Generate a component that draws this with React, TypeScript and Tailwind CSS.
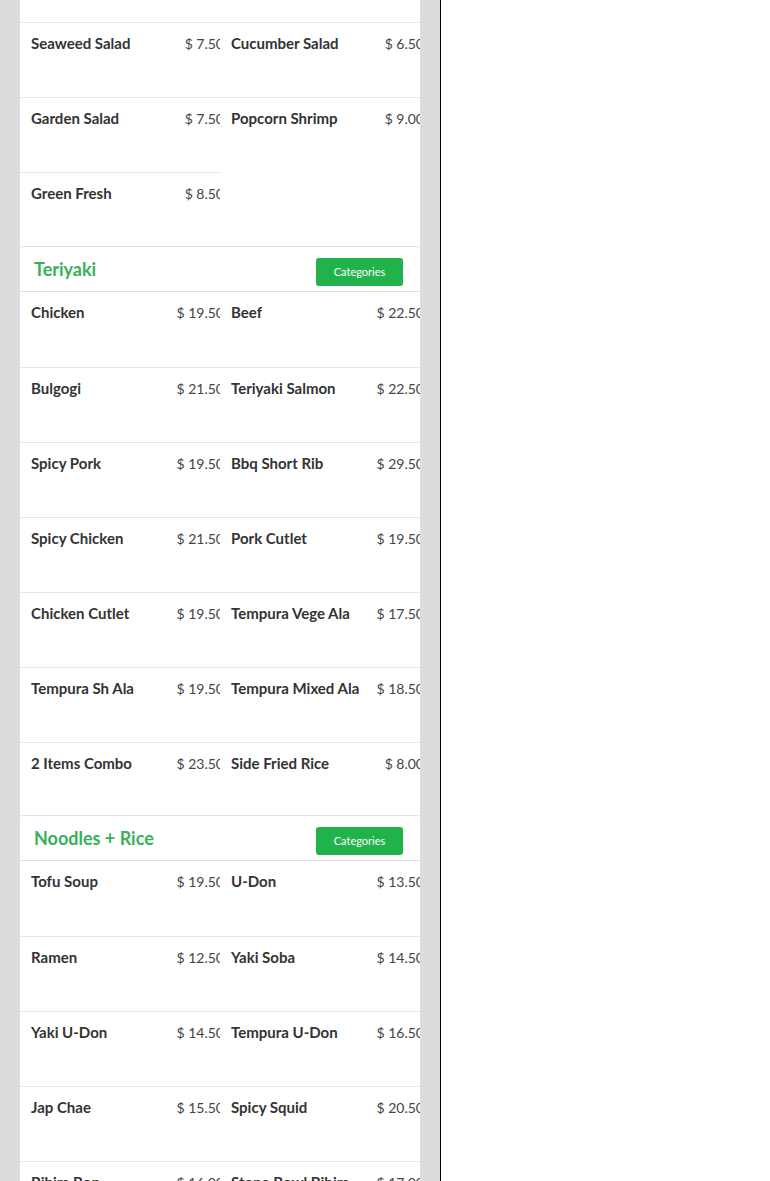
import React from "react";

type Item = [string, string];

const salads: Item[] = [
  ["Seaweed Salad", "$ 7.50"],
  ["Cucumber Salad", "$ 6.50"],
  ["Garden Salad", "$ 7.50"],
  ["Popcorn Shrimp", "$ 9.00"],
  ["Green Fresh", "$ 8.50"],
];

const teriyaki: Item[] = [
  ["Chicken", "$ 19.50"],
  ["Beef", "$ 22.50"],
  ["Bulgogi", "$ 21.50"],
  ["Teriyaki Salmon", "$ 22.50"],
  ["Spicy Pork", "$ 19.50"],
  ["Bbq Short Rib", "$ 29.50"],
  ["Spicy Chicken", "$ 21.50"],
  ["Pork Cutlet", "$ 19.50"],
  ["Chicken Cutlet", "$ 19.50"],
  ["Tempura Vege Ala", "$ 17.50"],
  ["Tempura Sh Ala", "$ 19.50"],
  ["Tempura Mixed Ala", "$ 18.50"],
  ["2 Items Combo", "$ 23.50"],
  ["Side Fried Rice", "$ 8.00"],
];

const noodles: Item[] = [
  ["Tofu Soup", "$ 19.50"],
  ["U-Don", "$ 13.50"],
  ["Ramen", "$ 12.50"],
  ["Yaki Soba", "$ 14.50"],
  ["Yaki U-Don", "$ 14.50"],
  ["Tempura U-Don", "$ 16.50"],
  ["Jap Chae", "$ 15.50"],
  ["Spicy Squid", "$ 20.50"],
  ["Bibim Bop", "$ 16.00"],
  ["Stone Bowl Bibim", "$ 17.00"],
];

function Cell({ item, first }: { item: Item; first?: boolean }) {
  return (
    <div
      className={`h-[75px] overflow-hidden flex items-baseline justify-between pl-[11px] pt-[10px] ${
        first ? "" : "border-t border-[#e6e6e6]"
      }`}
    >
      <span className="text-[15px] leading-[20px] font-bold text-[#333333] whitespace-nowrap">
        {item[0]}
      </span>
      <span className="text-[14px] leading-[20px] text-[#444444] whitespace-nowrap shrink-0 mr-[-4px]">
        {item[1]}
      </span>
    </div>
  );
}

function Grid({ items, noTopBorder }: { items: Item[]; noTopBorder?: boolean }) {
  return (
    <div className="grid grid-cols-2">
      {items.map((it, i) => (
        <Cell key={i} item={it} first={noTopBorder && i < 2} />
      ))}
    </div>
  );
}

function Header({ title }: { title: string }) {
  return (
    <div className="h-[46px] border-y border-[#e0e0e0] flex items-start justify-between pl-[14px] pr-[17px] rounded-t-[3px]">
      <span className="pt-[11px] text-[18px] leading-[22px] font-bold text-[#38b05a]">
        {title}
      </span>
      <button className="mt-[11px] w-[87px] h-[28px] rounded-[3px] bg-[#22b24b] text-white text-[11px] leading-[28px] text-center">
        Categories
      </button>
    </div>
  );
}

export default function App() {
  return (
    <div
      className="flex h-[1181px] overflow-hidden bg-white"
      style={{ fontFamily: "Lato, 'Open Sans', sans-serif" }}
    >
      <div className="w-[440px] shrink-0 bg-[#dcdcdc] px-[20px]">
        <div className="bg-white">
          <div className="h-[22px]" />
          <Grid items={salads} />
          <div className="-mt-[1px] bg-white">
            <Header title="Teriyaki" />
            <Grid items={teriyaki} noTopBorder />
          </div>
          <div className="-mt-[2px] bg-white">
            <Header title="Noodles + Rice" />
            <Grid items={noodles} noTopBorder />
          </div>
        </div>
      </div>
      <div className="w-[1px] bg-black shrink-0" />
      <div className="flex-1 bg-white" />
    </div>
  );
}
